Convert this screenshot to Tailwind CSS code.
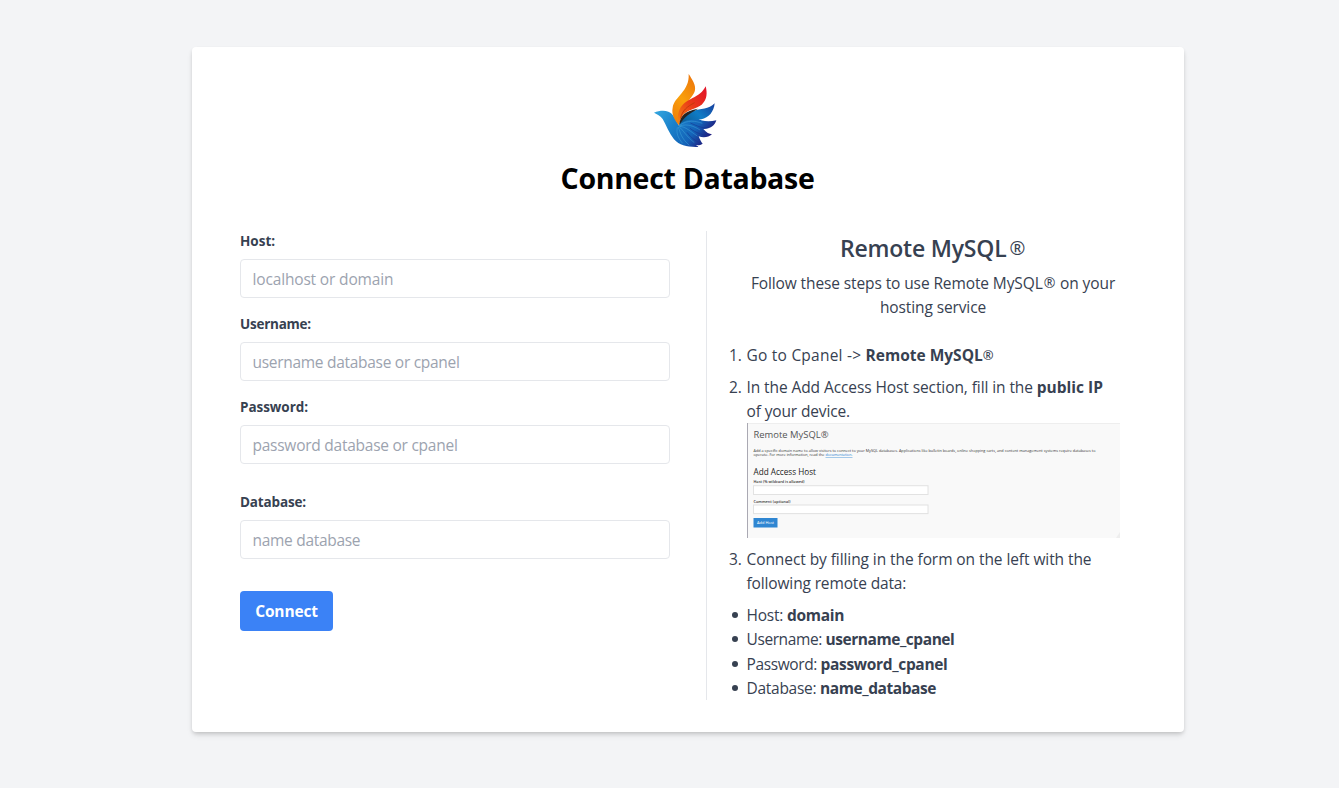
<!DOCTYPE html>
<html lang="en">
<head>
<meta charset="utf-8">
<title>Connect Database</title>
<script src="https://cdn.jsdelivr.net/npm/@tailwindcss/browser@4"></script>
</head>
<body class="h-[788px] overflow-hidden bg-[#f3f4f6] pl-48 pt-[47px] font-['Open_Sans','Noto_Sans',sans-serif] text-[15.5px] leading-6 text-[#374151]">
<main class="flex h-[685px] w-[992px] flex-col rounded bg-white px-12 pt-[18px] shadow-[0_4px_6px_-1px_rgba(0,0,0,0.1),0_2px_4px_-1px_rgba(0,0,0,0.16)]">
  <header class="flex flex-col items-center">
    <svg class="mr-[6px] h-[90px] w-[90px]" viewBox="0 0 270 270">
      <defs>
        <linearGradient id="or" x1="0.7" y1="0" x2="0.2" y2="1"><stop offset="0" stop-color="#ee7a0c"/><stop offset=".5" stop-color="#f9a00c"/><stop offset="1" stop-color="#f07e0a"/></linearGradient>
        <linearGradient id="rd" x1="1" y1="0" x2="0" y2="1"><stop offset="0" stop-color="#e2122b"/><stop offset=".5" stop-color="#ea3a18"/><stop offset="1" stop-color="#f58a10"/></linearGradient>
        <linearGradient id="bl" x1="0" y1="0" x2="1" y2=".4"><stop offset="0" stop-color="#35a8e0"/><stop offset=".4" stop-color="#1a80ca"/><stop offset=".75" stop-color="#1463b8"/><stop offset="1" stop-color="#1f1f80"/></linearGradient>
        <linearGradient id="wg" x1="0" y1="0.6" x2="1" y2="0"><stop offset="0" stop-color="#0d5f98"/><stop offset=".45" stop-color="#0f7cc6"/><stop offset="1" stop-color="#173f9d"/></linearGradient>
      </defs>
      <path fill="url(#bl)" d="M42 143C57 137 73 136 85 140C98 144 107 162 117 182C126 162 142 155 172 160C182 169 207 172 229 166C225 182 209 193 190 192C199 203 208 207 216 208C206 217 190 219 176 214C180 225 184 232 188 236C180 241 174 241 168 240C173 243 175 245 175 246C143 247 119 242 102 223C88 205 78 180 68 162C60 151 52 148 42 143Z"/>
      <path fill="url(#or)" d="M146 27C157 44 168 60 165 75C162 91 150 99 142 113C129 134 117 153 117 181C103 164 94 148 98 128C103 94 149 80 146 27Z"/>
      <path fill="url(#rd)" d="M197 64C202 84 202 103 185 119C170 131 145 133 130 149C122 159 120 168 117 181C110 161 113 137 127 121C146 98 180 99 197 64Z"/>
      <path fill="none" stroke="#c5380b" stroke-width="3" d="M122 160C126 137 142 124 164 113"/>
      <path fill="url(#wg)" d="M224 115C222 140 206 159 184 163C161 166 135 160 118 181C122 157 132 145 157 138C183 131 206 133 224 115Z"/>
      <path fill="#262322" d="M118 180C120 152 135 138 174 131C151 145 131 155 118 180Z"/>
      <g fill="none" stroke="#45a8dd" stroke-width="2" stroke-opacity=".7">
        <path d="M119 181C143 163 167 168 187 175M119 183C143 175 162 184 180 195M118 184C138 185 150 199 172 213M117 185C130 196 139 214 163 233M115 186C121 204 124 220 148 241M112 187C109 203 112 217 128 235"/>
      </g>
      <g fill="none" stroke="#17348f" stroke-width="2.5" stroke-opacity=".7"><path d="M151 174C174 184 187 190 203 188M150 190C167 203 187 211 206 211M141 202C153 219 171 231 184 235"/></g>
    </svg>
    <h1 class="mr-px mt-[5px] text-[28.5px] font-bold leading-9 tracking-[-0.3px] text-black">Connect Database</h1>
  </header>
  <div class="mt-[35px] flex">
    <form class="flex w-[430px] flex-col">
      <label class="text-[13.5px] font-bold leading-5">Host:</label>
      <input class="mt-2 h-[39px] rounded border border-[#e5e7eb] px-[11.5px] tracking-[-0.16px] placeholder:text-[#9ca3af]" placeholder="localhost or domain">
      <label class="mt-4 text-[13.5px] font-bold leading-5 tracking-[-0.25px]">Username:</label>
      <input class="mt-2 h-[39px] rounded border border-[#e5e7eb] px-[11.5px] tracking-[-0.29px] placeholder:text-[#9ca3af]" placeholder="username database or cpanel">
      <label class="mt-4 text-[13.5px] font-bold leading-5 tracking-[-0.05px]">Password:</label>
      <input class="mt-2 h-[39px] rounded border border-[#e5e7eb] px-[11.5px] tracking-[-0.25px] placeholder:text-[#9ca3af]" placeholder="password database or cpanel">
      <label class="mt-7 text-[13.5px] font-bold leading-5 tracking-[-0.15px]">Database:</label>
      <input class="mt-2 h-[39px] rounded border border-[#e5e7eb] px-[11.5px] tracking-[-0.3px] placeholder:text-[#9ca3af]" placeholder="name database">
      <button type="button" class="mt-8 h-10 w-[93px] rounded bg-[#3b82f6] font-bold tracking-[-0.15px] text-white">Connect</button>
    </form>
    <section class="ml-9 h-[469px] w-[414px] whitespace-nowrap border-l border-[#e5e7eb] pl-[22px]">
      <h2 class="h-[33px] pl-[16px] pt-px text-center text-[23px] font-semibold leading-8 tracking-[-0.2px]">Remote MySQL<span class="relative -top-[2px] ml-[3px] text-[19px] font-normal leading-none">®</span></h2>
      <p class="mt-[7px] pl-[17px] text-center tracking-[-0.11px]">Follow these steps to use Remote MySQL<span class="relative -top-px mx-px text-[14px] leading-none">®</span> on your<br>hosting service</p>
      <ol class="mt-6 flex flex-col gap-2">
        <li class="flex"><span class="w-[17.5px]">1.</span><div><span class="tracking-[0.23px]">Go to Cpanel -&gt; </span><b>Remote MySQL</b><span class="relative -top-px text-[13px] font-semibold leading-none">®</span></div></li>
        <li class="flex"><span class="w-[17.5px]">2.</span><div>
          <p><span class="tracking-[-0.09px]">In the Add Access Host section, fill in the </span><b>public IP</b></p>
          <p class="tracking-[-0.14px]">of your device.</p>
          <svg class="block h-[115px] w-[373px]" viewBox="0 0 373 115" font-family="Open Sans, sans-serif" fill="#333">
            <rect width="373" height="115" fill="#f9f9f9"/>
            <path fill="#eee" d="M0 0h373v1H0z"/><path fill="#aaa9b3" d="M0 0h1v115H0z"/>
            <path fill="#eee" d="M373 109v6h-4z"/>
            <text x="6.5" y="15" font-size="9.4" textLength="75" lengthAdjust="spacingAndGlyphs" fill="#555">Remote MySQL®</text>
            <text x="6.5" y="28.6" font-size="3.9" textLength="342" lengthAdjust="spacingAndGlyphs">Add a specific domain name to allow visitors to connect to your MySQL databases. Applications like bulletin boards, online shopping carts, and content management systems require databases to</text>
            <text x="6.5" y="33.2" font-size="3.9" textLength="71" lengthAdjust="spacingAndGlyphs">operate. For more information, read the</text>
            <text x="78.5" y="33.2" font-size="3.9" textLength="27" lengthAdjust="spacingAndGlyphs" fill="#1f7fd0" text-decoration="underline">documentation.</text>
            <text x="6.5" y="52" font-size="8.4" textLength="62.5" lengthAdjust="spacingAndGlyphs" fill="#222">Add Access Host</text>
            <text x="6.5" y="60.3" font-size="3.8" font-weight="600" textLength="51" lengthAdjust="spacingAndGlyphs">Host (% wildcard is allowed)</text>
            <rect x="6.5" y="62.7" width="174.5" height="8.8" fill="#fff" stroke="#e2e2e2"/>
            <text x="6.5" y="79.6" font-size="3.8" font-weight="600" textLength="37" lengthAdjust="spacingAndGlyphs">Comment (optional)</text>
            <rect x="6.5" y="82" width="174.5" height="8.6" fill="#fff" stroke="#e2e2e2"/>
            <rect x="6.5" y="95" width="24" height="9.5" fill="#2f86d2"/>
            <text x="10" y="101.3" font-size="3.8" textLength="17" lengthAdjust="spacingAndGlyphs" fill="#fff">Add Host</text>
          </svg>
        </div></li>
        <li class="mt-px flex"><span class="w-[17.5px]">3.</span><div><p class="tracking-[-0.08px]">Connect by filling in the form on the left with the</p><p class="tracking-[-0.14px]">following remote data:</p></div></li>
      </ol>
      <ul class="mt-2 leading-[24.3px]">
        <li class="flex items-center"><i class="ml-[3px] mr-[8.5px] size-[6px] rounded-full bg-[#374151]"></i><span class="whitespace-pre tracking-[-0.2px]">Host: </span><b class="tracking-[-0.3px]">domain</b></li>
        <li class="flex items-center"><i class="ml-[3px] mr-[8.5px] size-[6px] rounded-full bg-[#374151]"></i><span class="whitespace-pre tracking-[-0.4px]">Username: </span><b class="tracking-[-0.45px]">username_cpanel</b></li>
        <li class="flex items-center"><i class="ml-[3px] mr-[8.5px] size-[6px] rounded-full bg-[#374151]"></i><span class="whitespace-pre tracking-[-0.39px]">Password: </span><b class="tracking-[-0.33px]">password_cpanel</b></li>
        <li class="flex items-center"><i class="ml-[3px] mr-[8.5px] size-[6px] rounded-full bg-[#374151]"></i><span class="whitespace-pre tracking-[-0.28px]">Database: </span><b class="tracking-[-0.43px]">name_database</b></li>
      </ul>
    </section>
  </div>
</main>
</body>
</html>
